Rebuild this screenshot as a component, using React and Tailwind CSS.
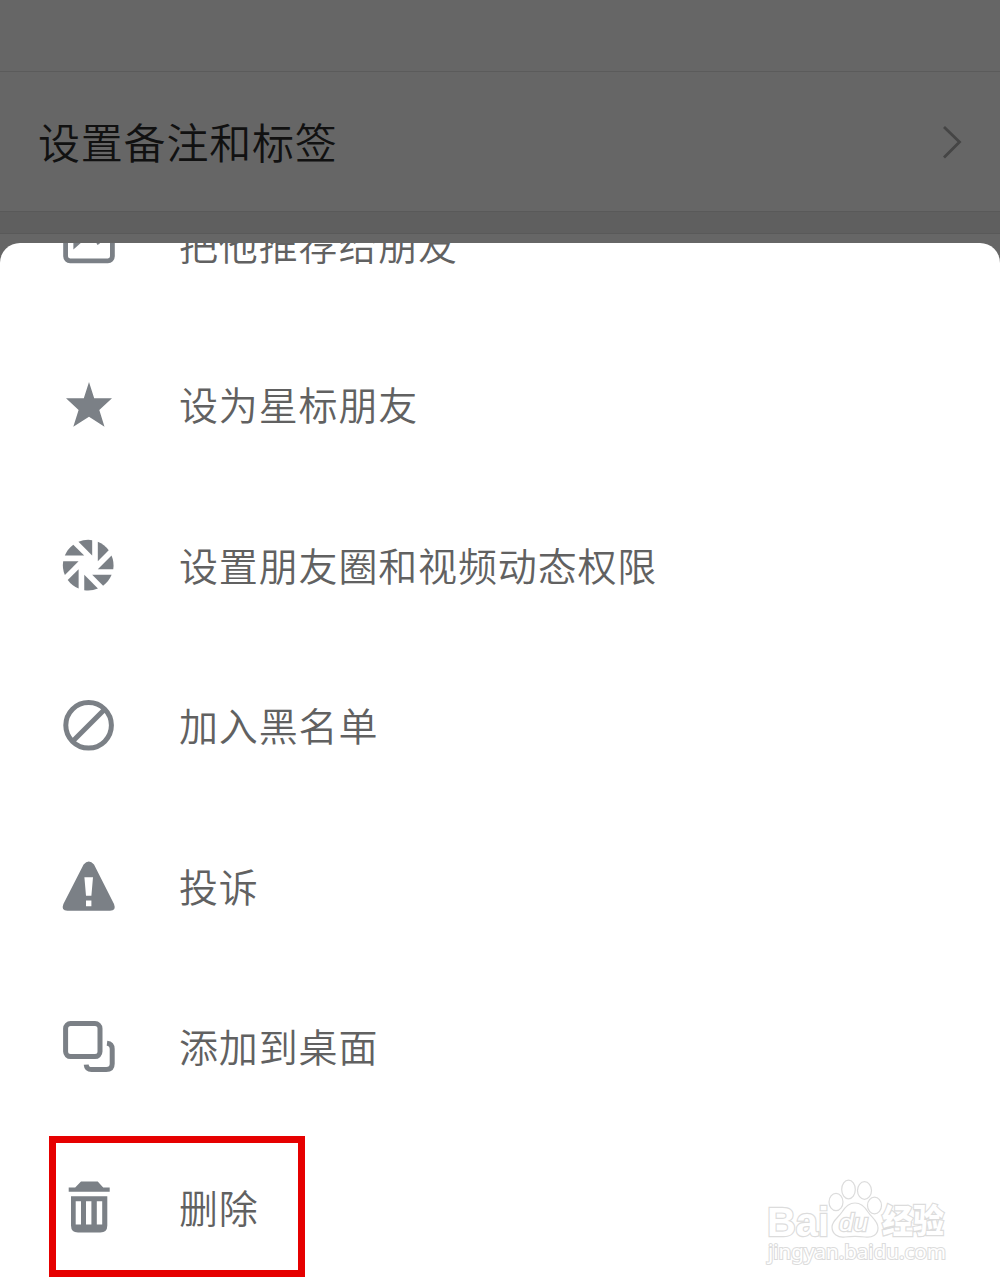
const APERTURE_ANGLES = [0, 45, 90, 135, 180, 225, 270, 315]

function RecommendIcon() {
  return (
    <>
      <rect x="7.6" y="7" width="46.8" height="37.8" rx="4.5" fill="none" stroke="currentColor" strokeWidth="4.8" />
      <path d="M15.4 22V33.5L22.5 27.3V22Z" />
      <path d="M38.5 27.3L39.6 29L42 27.3V24H38.5Z" />
    </>
  )
}

function StarIcon() {
  return (
    <path d="M31 6L36.2 22.3H54L41.3 34L46.5 50.7L31 40.8L15.3 50.7L20.6 34L8 22.3H25.8Z" />
  )
}

function ApertureIcon() {
  return (
    <g transform="translate(30.2 28.2)">
      {APERTURE_ANGLES.map((angle) => (
        <path
          key={angle}
          d="M9.6 -4V-23.4A25.3 25.3 0 0 1 20.5 -14.9Z"
          transform={`rotate(${angle})`}
        />
      ))}
    </g>
  )
}

function BlockIcon() {
  return (
    <g fill="none" stroke="currentColor" strokeWidth="5">
      <circle cx="30.6" cy="28.3" r="22.8" />
      <path d="M15 44L46.2 12.7" />
    </g>
  )
}

function ReportIcon() {
  return (
    <path
      fillRule="evenodd"
      d="M25.6 6.4Q30.8 0.6 36 6.4L56 46Q58.6 52.8 52 52.8H9.4Q2.8 52.8 5.4 46ZM26.4 19.3L28 37.8H33.4L35 19.3ZM28 42.5V48.2H33.4V42.5Z"
    />
  )
}

function DesktopIcon() {
  return (
    <g fill="none" stroke="currentColor" strokeWidth="5">
      <rect x="7.6" y="5.6" width="34.4" height="33" rx="5" />
      <path d="M49 25.2Q54.2 25.8 54.2 31V45.7Q54.2 51.5 48.3 51.5H33.5Q28.6 51.5 28.2 46.6" />
    </g>
  )
}

function TrashIcon() {
  return (
    <>
      <path d="M10.7 8.5H17.2L23 2.6H39.7L45.2 8.5H51.7V12.8H10.7Z" />
      <path
        fillRule="evenodd"
        d="M13 17.2H49.3V46.5Q49.3 53.5 42.3 53.5H20Q13 53.5 13 46.5ZM17.7 22.3V45.5H23V22.3ZM28 22.3V45.5H33.4V22.3ZM38.8 22.3V45.5H44.2V22.3Z"
      />
    </>
  )
}

const MENU_ITEMS = [
  { label: '把他推荐给朋友', icon: RecommendIcon },
  { label: '设为星标朋友', icon: StarIcon },
  { label: '设置朋友圈和视频动态权限', icon: ApertureIcon },
  { label: '加入黑名单', icon: BlockIcon },
  { label: '投诉', icon: ReportIcon },
  { label: '添加到桌面', icon: DesktopIcon },
  { label: '删除', icon: TrashIcon, highlighted: true },
]

function MenuItem({ item }) {
  const Icon = item.icon

  return (
    <li className="relative flex h-[160.5px] items-center pl-[58px]">
      <svg viewBox="0 0 60 60" className="size-[60px] shrink-0 text-[#7b8086]" fill="currentColor">
        <Icon />
      </svg>
      <span className="mb-[5px] ml-[61px] text-[39px] leading-none font-[350] tracking-[0.85px] text-[#616161]">
        {item.label}
      </span>
      {item.highlighted && (
        <div className="absolute top-[7.5px] left-[49px] h-[141px] w-[256px] border-7 border-[#e60000]" />
      )}
    </li>
  )
}

function Watermark() {
  return (
    <svg
      viewBox="0 0 200 100"
      className="absolute top-[1172px] left-[760px] h-[100px] w-[200px] font-['Liberation_Sans','Noto_Sans_CJK_SC',sans-serif]"
      fill="#fff"
      stroke="#dcdcdc"
      strokeWidth="1.2"
    >
      <g fontWeight="bold" strokeWidth="2.4" style={{ paintOrder: 'stroke' }}>
        <text x="7" y="63.5" fontSize="41" textLength="62" lengthAdjust="spacingAndGlyphs">Bai</text>
        <text x="122" y="61" fontSize="33" fontWeight="900" textLength="62" lengthAdjust="spacingAndGlyphs">经验</text>
      </g>
      <ellipse cx="76" cy="30" rx="7" ry="8.7" />
      <ellipse cx="88.5" cy="17.5" rx="6.8" ry="9.3" />
      <ellipse cx="104.5" cy="18.5" rx="7" ry="8.8" />
      <ellipse cx="114.5" cy="33.5" rx="7" ry="8.3" />
      <path d="M95 31C101 31 105 35 108 40C112 46 118 49 118 56C118 63 112 66 105 65C98 64 92 64 85 65C78 66 72 62 72 55C72 49 78 46 82 40C85 35 89 31 95 31Z" />
      <text x="79" y="59" fontSize="24" textLength="29" lengthAdjust="spacingAndGlyphs" strokeWidth="2.4" fontStyle="italic" style={{ paintOrder: 'stroke' }}>du</text>
      <text
        x="8"
        y="87"
        fontSize="19"
        strokeWidth="2"
        textLength="178"
        lengthAdjust="spacingAndGlyphs"
        className="font-['Noto_Sans',sans-serif]"
        style={{ paintOrder: 'stroke' }}
      >
        jingyan.baidu.com
      </text>
    </svg>
  )
}

export default function App() {
  return (
    <div className="relative flex h-[1287px] w-[1000px] flex-col overflow-hidden bg-[#666] font-['Noto_Sans_CJK_SC',sans-serif]">
      {/* Dimmed profile page */}
      <div className="h-[72px] shrink-0 border-b border-[#5b5b5b]" />
      <div className="flex h-[139px] shrink-0 items-center justify-between pr-[38px] pl-[38px]">
        <span className="mb-px text-[42px] leading-none font-[350] tracking-[0.8px] text-[#111]">
          设置备注和标签
        </span>
        <svg viewBox="0 0 20 36" className="h-9 w-5" fill="none" stroke="#454545" strokeWidth="2.8">
          <path d="M2 3L17.5 18L2 33.5" />
        </svg>
      </div>
      <div className="h-[23px] shrink-0 border-y border-[#595959] bg-[#5f5f5f]" />

      {/* Bottom sheet, scrolled down */}
      <div className="mt-[9px] flex-1 overflow-hidden rounded-t-[20px] bg-white">
        <ul className="-mt-[77.5px]">
          {MENU_ITEMS.map((item) => (
            <MenuItem key={item.label} item={item} />
          ))}
        </ul>
      </div>

      <Watermark />
    </div>
  )
}
